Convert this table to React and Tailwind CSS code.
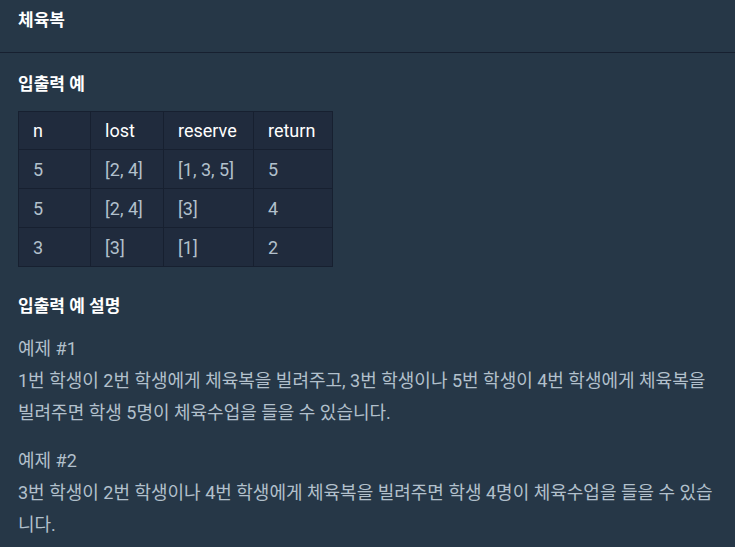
import React from "react";

const rows = [
  ["5", "[2, 4]", "[1, 3, 5]", "5"],
  ["5", "[2, 4]", "[3]", "4"],
  ["3", "[3]", "[1]", "2"],
];

function App() {
  return (
    <div
      className="min-h-screen w-full bg-[#263747] text-[#b2c0cc]"
      style={{ fontFamily: '"Roboto", "Noto Sans CJK KR", sans-serif' }}
    >
      {/* title bar */}
      <div className="h-[53px] border-b border-[#172030] px-[18px] pt-[7px]">
        <h1 className="text-[17px] font-bold leading-[26px] text-white">체육복</h1>
      </div>

      <div className="pl-[18px] pr-[16px] pt-[18px]">
        <h2 className="text-[17px] font-bold leading-[26px] text-white">입출력 예</h2>

        <table className="mt-[14px] border-collapse bg-[#202b3d] text-[18px]">
          <thead>
            <tr className="h-[38px] text-white">
              <th className="w-[72px] border border-[#172030] pl-[14px] text-left font-normal">n</th>
              <th className="w-[73px] border border-[#172030] pl-[14px] text-left font-normal">lost</th>
              <th className="w-[90px] border border-[#172030] pl-[14px] text-left font-normal">reserve</th>
              <th className="w-[79px] border border-[#172030] pl-[14px] text-left font-normal">return</th>
            </tr>
          </thead>
          <tbody>
            {rows.map((r, i) => (
              <tr key={i} className="h-[39px]">
                {r.map((c, j) => (
                  <td key={j} className="border border-[#172030] pl-[14px]">{c}</td>
                ))}
              </tr>
            ))}
          </tbody>
        </table>

        <h2 className="mt-[26px] text-[17px] font-bold leading-[26px] text-white">입출력 예 설명</h2>

        <div className="mt-[14px] text-[18px] leading-[32px]">
          <p>예제 #1</p>
          <p>
            1번 학생이 2번 학생에게 체육복을 빌려주고, 3번 학생이나 5번 학생이 4번 학생에게 체육복을 빌려주면 학생 5명이 체육수업을 들을 수 있습니다.
          </p>
          <p className="mt-[16px]">예제 #2</p>
          <p>
            3번 학생이 2번 학생이나 4번 학생에게 체육복을 빌려주면 학생 4명이 체육수업을 들을 수 있습니다.
          </p>
        </div>
      </div>
    </div>
  );
}

export default App;
